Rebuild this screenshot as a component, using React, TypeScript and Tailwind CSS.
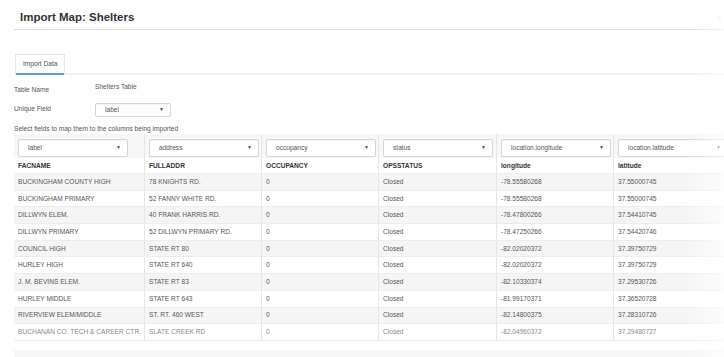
import React from 'react';

const columns = [
  { field: 'label', header: 'FACNAME' },
  { field: 'address', header: 'FULLADDR' },
  { field: 'occupancy', header: 'OCCUPANCY' },
  { field: 'status', header: 'OPSSTATUS' },
  { field: 'location.longitude', header: 'longitude' },
  { field: 'location.latitude', header: 'latitude' },
];

const rows = [
  ['BUCKINGHAM COUNTY HIGH', '78 KNIGHTS RD.', '0', 'Closed', '-78.55580268', '37.55000745'],
  ['BUCKINGHAM PRIMARY', '52 FANNY WHITE RD.', '0', 'Closed', '-78.55580268', '37.55000745'],
  ['DILLWYN ELEM.', '40 FRANK HARRIS RD.', '0', 'Closed', '-78.47800266', '37.54410745'],
  ['DILLWYN PRIMARY', '52 DILLWYN PRIMARY RD.', '0', 'Closed', '-78.47250266', '37.54420746'],
  ['COUNCIL HIGH', 'STATE RT 80', '0', 'Closed', '-82.02020372', '37.39750729'],
  ['HURLEY HIGH', 'STATE RT 640', '0', 'Closed', '-82.02020372', '37.39750729'],
  ['J. M. BEVINS ELEM.', 'STATE RT 83', '0', 'Closed', '-82.10330374', '37.29530726'],
  ['HURLEY MIDDLE', 'STATE RT 643', '0', 'Closed', '-81.99170371', '37.36520728'],
  ['RIVERVIEW ELEM/MIDDLE', 'ST. RT. 460 WEST', '0', 'Closed', '-82.14800375', '37.28310726'],
  ['BUCHANAN CO. TECH & CAREER CTR.', 'SLATE CREEK RD', '0', 'Closed', '-82.04960372', '37.29480727'],
];

function FakeSelect({ value, className }: { value: string; className?: string }) {
  return (
    <div
      className={`flex items-center justify-between border border-[#d6d6d6] rounded-[2px] bg-white pl-[9px] pr-[6px] shadow-[inset_0_1px_1px_rgba(0,0,0,0.04)] ${className ?? ''}`}
    >
      <span className="text-[6.6px] text-[#555]">{value}</span>
      <span className="text-[5px] text-[#444]">▼</span>
    </div>
  );
}

const grid = 'grid grid-cols-[131px_117px_117px_118px_117px_117px]';

export default function App() {
  return (
    <div
      className="relative w-[724px] h-[357px] overflow-hidden bg-white text-[#555]"
      style={{ fontFamily: '"Liberation Sans", Arial, sans-serif' }}
    >
      {/* Header */}
      <div className="ml-[14px] h-[30px] border-b border-[#dcdcdc] pl-[6px] pt-[10px] flex justify-between">
        <h1 className="text-[11.5px] leading-[14px] font-bold text-[#333]">Import Map: Shelters</h1>
        <span className="text-[7px] leading-[14px] text-[#b8cce4] pr-[2px]">«</span>
      </div>

      {/* Tabs */}
      <div className="ml-[14px] mt-[24px] flex border-b-2 border-[#f0f0f0]">
        <div className="ml-[1px] h-[19px] px-[7px] flex items-center border border-b-0 border-[#e6e6e6] relative">
          <span className="text-[6.6px] text-[#555]">Import Data</span>
          <div className="absolute left-0 right-0 bottom-[-2px] h-[2px] bg-[#5a9bd3]" />
        </div>
      </div>

      {/* Form */}
      <div className="ml-[14px] mt-[7px] flex items-start h-[10px]">
        <span className="w-[81px] text-[6.6px] leading-[10px] text-[#555] mt-[3px]">Table Name</span>
        <span className="text-[6.6px] leading-[10px] text-[#555]">Shelters Table</span>
      </div>
      <div className="ml-[14px] mt-[11px] flex items-center h-[14px]">
        <span className="w-[81px] text-[6.6px] text-[#555] -mt-[2px]">Unique Field</span>
        <FakeSelect value="label" className="w-[76px] h-[14px]" />
      </div>
      <div className="ml-[14px] mt-[8px] text-[6.6px] leading-[8px] text-[#555]">
        Select fields to map them to the columns being imported
      </div>

      {/* Table */}
      <div className="ml-[14px] mt-[1px]">
        <div className={`${grid} h-[24px] bg-[#f7f7f7]`}>
          {columns.map((c) => (
            <div key={c.field} className="border-r border-[#e6e6e6] flex items-start pt-[5px] pl-[4px]">
              <FakeSelect value={c.field} className="w-[110px] h-[18px]" />
            </div>
          ))}
        </div>
        <div className={`${grid} h-[16px] bg-white border-b border-[#ececec]`}>
          {columns.map((c) => (
            <div key={c.header} className="border-r border-[#e6e6e6] flex items-center pl-[4px]">
              <span className="text-[6.6px] font-bold text-[#333]">{c.header}</span>
            </div>
          ))}
        </div>
        {rows.map((r, i) => (
          <div
            key={i}
            className={`${grid} h-[16.7px] border-b border-[#ededed] ${i % 2 === 0 ? 'bg-[#f5f5f5]' : 'bg-white'}`}
          >
            {r.map((v, j) => (
              <div key={j} className="border-r border-[#e6e6e6] flex items-center pl-[4px] overflow-hidden whitespace-nowrap">
                <span className={`text-[6.6px] ${i === rows.length - 1 ? 'text-[#8a8a8a]' : 'text-[#555]'}`}>{v}</span>
              </div>
            ))}
          </div>
        ))}
        <div className="mt-[9px] h-[7px] bg-[#f7f7f7]" />
      </div>

      {/* right edge fade */}
      <div className="pointer-events-none absolute top-0 right-0 h-full w-[40px] bg-gradient-to-r from-transparent to-white/70" />
    </div>
  );
}
